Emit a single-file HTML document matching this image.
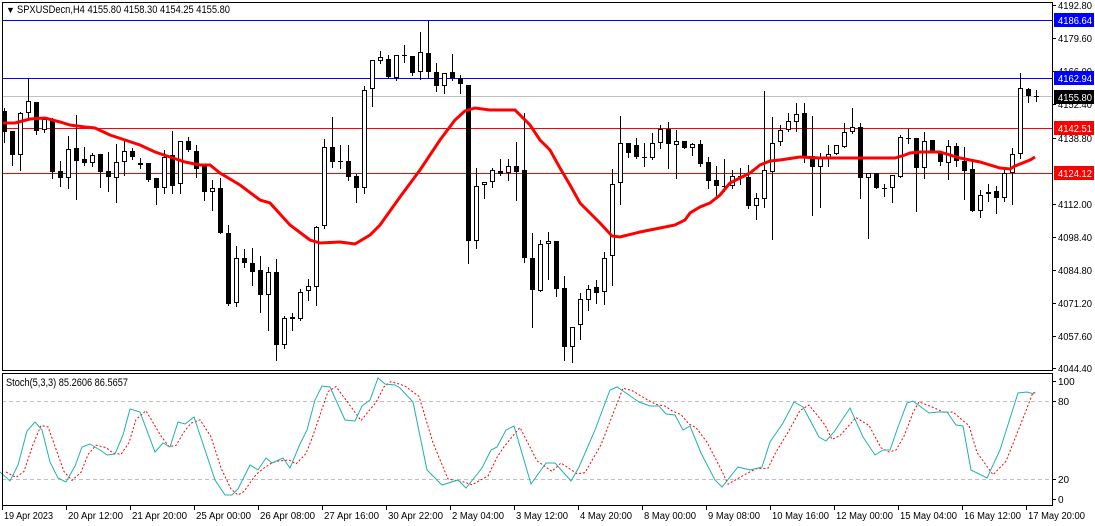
<!DOCTYPE html>
<html><head><meta charset="utf-8"><style>
html,body{margin:0;padding:0;background:#fff;width:1095px;height:526px;overflow:hidden}
svg{display:block;font-family:"Liberation Sans",sans-serif;font-size:10px}
</style></head><body>
<svg id="s" width="1095" height="526" viewBox="0 0 1095 526" xmlns="http://www.w3.org/2000/svg" shape-rendering="crispEdges">
<rect x="0" y="0" width="1095" height="526" fill="#fff"/>
<g id="lines">
<line x1="2" y1="20.5" x2="1052" y2="20.5" stroke="#0000ff"/>
<line x1="2" y1="78.5" x2="1052" y2="78.5" stroke="#0000ff"/>
<line x1="2" y1="96.5" x2="1052" y2="96.5" stroke="#c0c0c0"/>
<line x1="2" y1="128.5" x2="1052" y2="128.5" stroke="#ff0000"/>
<line x1="2" y1="173.5" x2="1052" y2="173.5" stroke="#ff0000"/>
<line x1="2" y1="401.5" x2="1052" y2="401.5" stroke="#c0c0c0" stroke-dasharray="4,3"/>
<line x1="2" y1="479.5" x2="1052" y2="479.5" stroke="#c0c0c0" stroke-dasharray="4,3"/>
</g>
<g id="candles"></g>
<polyline id="ma" fill="none" stroke="#ff0000" stroke-width="3" shape-rendering="auto" points="2,123 15,123 30,119 45,118 60,122 70,125 85,127 95,128 110,135 125,140 140,145 155,152 170,157 185,162 200,165 210,165 220,173 240,185 260,200 270,203 290,225 310,240 320,243 340,242 355,244 370,235 380,225 400,197 420,170 440,140 455,120 465,111 475,108 490,110 515,110 530,125 540,140 550,150 560,168 570,185 580,203 600,223 612,236 620,237 640,232 660,228 675,225 685,220 690,213 700,207 710,203 720,195 730,183 740,178 750,173 760,165 770,161 780,160 800,157 820,158 895,158 905,155 910,153 920,152 940,152 960,158 980,162 1000,168 1010,169 1015,166 1030,160 1035,157"/>
<polyline id="st2" fill="none" stroke="#ff0000" stroke-dasharray="2,2" shape-rendering="auto"/>
<polyline id="st1" fill="none" stroke="#20b2aa" shape-rendering="auto"/>
<rect x="2.5" y="2.5" width="1050" height="368" fill="none" stroke="#000"/>
<rect x="2.5" y="373.5" width="1050" height="132" fill="none" stroke="#000"/>
<g id="axis" fill="#000"></g>
<text x="6" y="13" font-size="9">▼</text>
<text x="17" y="13" textLength="213" lengthAdjust="spacingAndGlyphs" font-size="11">SPXUSDecn,H4  4155.80 4158.30 4154.25 4155.80</text>
<text x="6" y="386" textLength="122" lengthAdjust="spacingAndGlyphs" font-size="11">Stoch(5,3,3) 85.2606 86.5657</text>
</svg>
<script>
var NS="http://www.w3.org/2000/svg";
function el(p,t,a,txt){var e=document.createElementNS(NS,t);for(var k in a)e.setAttribute(k,a[k]);if(txt)e.textContent=txt;p.appendChild(e);return e;}
var C=[[111,132,108,142,1],[131,155,131,165,1],[113,155,112,170,0],[101,113,78,118,0],[102,131,102,134,1],[119,130,118,132,0],[120,172,118,178,1],[171,178,161,186,1],[149,178,136,188,0],[148,161,115,199,1],[159,163,147,165,1],[155,163,153,166,0],[154,172,154,187,1],[171,177,152,191,1],[162,178,144,202,0],[151,162,140,175,0],[151,157,148,159,1],[163,165,158,168,0],[163,180,163,181,1],[178,188,178,204,1],[157,188,150,193,0],[155,186,131,193,1],[141,184,141,193,0],[141,150,137,151,1],[151,169,145,177,1],
[165,192,165,200,1],[188,192,180,210,0],[188,233,178,233,1],[233,304,225,305,1],[258,303,246,306,0],[258,263,249,267,1],[263,272,248,285,1],[270,295,256,312,1],[272,295,267,330,0],[272,345,259,360,1],[318,345,316,348,0],[317,319,313,330,1],[292,319,289,320,0],[286,291,279,300,0],[227,287,226,305,0],[147,226,139,228,0],[147,162,117,167,1],[161,162,145,168,1],[161,177,145,180,1],[176,188,174,202,1],[90,188,86,193,0],[60,89,60,106,0],[57,61,51,63,0],[59,77,55,78,1],[55,78,55,80,0],[55,56,45,62,0],[56,73,56,75,1],[52,72,32,79,0],[53,72,20,78,1],[72,86,63,91,1],[73,86,73,93,0],[72,78,54,80,1],[78,84,75,93,1],[85,241,85,263,1],[186,241,168,248,0],[182,185,182,198,0],[170,182,168,187,0],[171,174,159,175,1],[166,173,159,180,0],[166,172,142,200,1],[170,258,113,262,1],[258,290,233,327,1],[244,291,240,291,0],[241,244,232,279,0],[241,289,241,296,1],[288,347,276,360,1],[327,347,327,362,0],[299,325,293,339,0],[289,300,285,310,0],[287,293,280,303,1],[258,292,252,304,0],[184,256,169,285,0],[143,183,116,204,0],[143,153,143,157,1],[145,157,138,158,1],
[157,158,143,166,0],[143,158,133,159,0],[129,143,125,148,0],[129,144,122,168,1],[141,145,130,178,0],[141,148,141,148,1],[144,148,143,155,0],[144,164,140,166,1],[162,181,157,188,1],[180,186,166,195,1],[186,187,159,191,0],[176,186,170,188,0],[176,177,168,184,0],[177,206,165,208,1],[198,206,193,219,0],[170,199,91,207,0],[143,172,117,239,0],[130,142,125,145,0],[121,130,113,131,0],[114,122,103,131,0],[113,157,103,162,1],[156,167,116,215,1],[158,167,153,207,0],[154,158,145,166,0],[145,154,145,154,0],[132,147,123,147,0],[127,132,108,133,0],[127,178,123,198,1],[173,178,173,238,0],[173,188,173,188,1],[188,189,184,196,0],[175,188,175,202,0],[137,177,135,177,0],[138,139,129,143,0],[138,168,138,211,1],[141,168,132,178,0],[140,152,140,152,1],[152,162,151,165,1],[146,163,140,179,0],[146,161,143,166,1],[161,171,147,199,1],[169,211,160,211,1],[195,211,190,217,0],[192,194,184,201,0],[191,198,186,213,1],[173,198,168,201,0],[154,173,148,204,0],[88,154,73,158,0],[89,96,88,102,1],[96,97,90,101,0]];
var g=document.getElementById("candles");
C.forEach(function(c,i){var x=4+8*i;
el(g,"line",{x1:x+.5,y1:c[2],x2:x+.5,y2:c[3]+1,stroke:"#000"});
var h=Math.max(1,c[1]-c[0]);
if(c[4])el(g,"rect",{x:x-2,y:c[0],width:5,height:h,fill:"#000"});
else if(h<=1)el(g,"line",{x1:x-2,y1:c[0]+.5,x2:x+3,y2:c[0]+.5,stroke:"#000"});
else el(g,"rect",{x:x-1.5,y:c[0]+.5,width:4,height:h-1,fill:"#fff",stroke:"#000"});
});
var T=[[0,472],[10,481],[18,465],[27,431],[35,422],[42,430],[50,462],[58,478],[66,482],[75,466],[82,447],[90,444],[100,450],[107,455],[115,454],[123,435],[130,409],[140,412],[155,452],[163,443],[170,447],[178,422],[185,424],[194,417],[205,450],[215,480],[225,495],[232,495],[238,489],[250,465],[258,470],[266,458],[272,463],[283,458],[290,468],[300,444],[307,430],[315,400],[322,386],[330,387],[345,420],[355,421],[362,406],[370,400],[378,378],[385,384],[395,385],[400,388],[413,402],[427,470],[442,485],[458,480],[466,488],[482,468],[491,450],[497,447],[506,430],[514,426],[531,484],[546,463],[555,463],[571,481],[579,467],[595,430],[610,390],[617,387],[626,393],[639,402],[650,406],[659,406],[666,414],[675,415],[683,430],[690,426],[701,453],[715,480],[722,487],[738,467],[750,470],[762,467],[770,442],[783,423],[794,402],[803,407],[819,437],[826,441],[834,432],[850,408],[863,437],[875,455],[883,450],[890,450],[898,427],[907,403],[913,401],[929,413],[938,412],[947,412],[956,425],[963,426],[971,470],[987,478],[1000,450],[1018,393],[1027,392],[1034,394]];
document.getElementById("st1").setAttribute("points",T.map(function(p){return p.join(",")}).join(" "));
var R=[];for(var i=0;i<T.length;i++){var y=i>0?(T[i][1]*0.6+T[i-1][1]*0.4):T[i][1];var x=Math.min(T[i][0]+6,1036);R.push([x,y]);}
document.getElementById("st2").setAttribute("points",R.map(function(p){return p[0]+","+p[1].toFixed(1)}).join(" "));
var a=document.getElementById("axis");
var P=[["4192.80",5],["4179.60",38],["4166.00",71],["4152.40",104],["4138.80",138],["4112.00",204],["4098.40",237],["4084.80",270],["4071.20",303],["4057.60",336],["4044.40",368]];
P.forEach(function(p){el(a,"line",{x1:1052,y1:p[1]+.5,x2:1056,y2:p[1]+.5,stroke:"#000"});el(a,"text",{x:1058,y:p[1]+4,textLength:34,lengthAdjust:"spacingAndGlyphs"},p[0]);});
var B=[["4186.64",20,"#0000ff","#fff"],["4162.94",78,"#0000ff","#fff"],["4155.80",97,"#000","#fff"],["4142.51",128,"#ff0000","#fff"],["4124.12",173,"#ff0000","#fff"]];
B.forEach(function(b){el(a,"rect",{x:1054,y:b[1]-7,width:40,height:14,fill:b[2]});el(a,"text",{x:1058,y:b[1]+4,fill:b[3],textLength:34,lengthAdjust:"spacingAndGlyphs"},b[0]);});
[["100",381],["80",401],["20",479],["0",499]].forEach(function(p){el(a,"line",{x1:1052,y1:p[1]+.5,x2:1056,y2:p[1]+.5,stroke:"#000"});el(a,"text",{x:1058,y:p[1]+4},p[0]);});
var L=[["19 Apr 2023",49],["20 Apr 12:00",55],["21 Apr 20:00",55],["25 Apr 00:00",55],["26 Apr 08:00",55],["27 Apr 16:00",55],["30 Apr 22:00",55],["2 May 04:00",52],["3 May 12:00",52],["4 May 20:00",52],["8 May 00:00",52],["9 May 08:00",52],["10 May 16:00",57],["12 May 00:00",57],["15 May 04:00",57],["16 May 12:00",57],["17 May 20:00",57]];
L.forEach(function(t,i){var x=2+64*i;el(a,"line",{x1:x+.5,y1:506,x2:x+.5,y2:510,stroke:"#000"});el(a,"text",{x:x+2,y:519,textLength:t[1],lengthAdjust:"spacingAndGlyphs"},t[0]);});
</script>
</body></html>
